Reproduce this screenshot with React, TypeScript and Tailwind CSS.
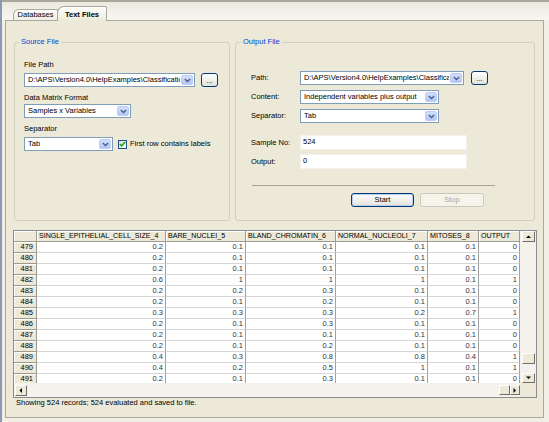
import React from "react";

const headers = [
  { label: "SINGLE_EPITHELIAL_CELL_SIZE_4", w: "w-[129px]" },
  { label: "BARE_NUCLEI_5", w: "w-[80px]" },
  { label: "BLAND_CHROMATIN_6", w: "w-[90px]" },
  { label: "NORMAL_NUCLEOLI_7", w: "w-[92px]" },
  { label: "MITOSES_8", w: "w-[51px]" },
  { label: "OUTPUT", w: "w-[41px]" },
];

const rows: [number, string[]][] = [
  [479, ["0.2", "0.1", "0.1", "0.1", "0.1", "0"]],
  [480, ["0.2", "0.1", "0.1", "0.1", "0.1", "0"]],
  [481, ["0.2", "0.1", "0.1", "0.1", "0.1", "0"]],
  [482, ["0.6", "1", "1", "1", "0.1", "1"]],
  [483, ["0.2", "0.2", "0.3", "0.1", "0.1", "0"]],
  [484, ["0.2", "0.1", "0.2", "0.1", "0.1", "0"]],
  [485, ["0.3", "0.3", "0.3", "0.2", "0.7", "1"]],
  [486, ["0.2", "0.1", "0.3", "0.1", "0.1", "0"]],
  [487, ["0.2", "0.1", "0.1", "0.1", "0.1", "0"]],
  [488, ["0.2", "0.1", "0.2", "0.1", "0.1", "0"]],
  [489, ["0.4", "0.3", "0.8", "0.8", "0.4", "1"]],
  [490, ["0.4", "0.2", "0.5", "1", "0.1", "1"]],
  [491, ["0.2", "0.1", "0.3", "0.1", "0.1", "0"]],
];

function Combo({ w, value }: { w: string; value: string }) {
  return (
    <div className={`flex h-[14px] shrink-0 ${w} border border-[#7f9db9] bg-white`}>
      <div className="flex-1 overflow-hidden whitespace-nowrap pl-[3px] leading-[12px]">{value}</div>
      <div className="m-px flex w-[12px] items-center justify-center rounded-[2px] border border-[#bccdf5] bg-gradient-to-b from-[#d3e0fd] to-[#b2c6f6]">
        <svg width="7" height="5" viewBox="0 0 7 5">
          <path d="M0.8 1 L3.5 3.6 L6.2 1" fill="none" stroke="#4d6185" strokeWidth="1.4" />
        </svg>
      </div>
    </div>
  );
}

function DotsButton() {
  return (
    <div className="flex h-[14px] w-[17px] shrink-0 items-end justify-center rounded-[3px] border border-[#003c74] bg-gradient-to-b from-white to-[#e3e2d9] pb-px leading-[9px]">
      ...
    </div>
  );
}

function ScrollBtn({ dir, cls }: { dir: "up" | "down" | "left" | "right"; cls: string }) {
  const vertical = dir === "up" || dir === "down";
  const d =
    dir === "up"
      ? "M0 3 L2.5 0.5 L5 3 Z"
      : dir === "down"
      ? "M0 0.5 L2.5 3 L5 0.5 Z"
      : dir === "left"
      ? "M3 0 L0.5 2.5 L3 5 Z"
      : "M0.5 0 L3 2.5 L0.5 5 Z";
  return (
    <div
      className={`flex shrink-0 items-center justify-center border border-t-white border-l-white border-r-[#716f64] border-b-[#716f64] bg-[#ece9d8] ${cls}`}
    >
      <svg width={vertical ? 5 : 3.5} height={vertical ? 3.5 : 5} viewBox={vertical ? "0 0 5 3.5" : "0 0 3.5 5"}>
        <path d={d} fill="#000" />
      </svg>
    </div>
  );
}

function Label({ children }: { children: React.ReactNode }) {
  return <div className="w-[49px] shrink-0 leading-[10px]">{children}</div>;
}

export default function App() {
  return (
    <div className="flex h-[422px] w-[549px] flex-col overflow-hidden border-l-2 border-[#9097b0] bg-[#f1efe5] font-['Liberation_Sans',Arial,sans-serif] text-[7.5px] leading-[10px] text-black">
      <div className="h-[2px] shrink-0 bg-[#aaa89a]" />

      {/* Tab strip */}
      <div className="flex h-[18px] shrink-0 items-end bg-gradient-to-b from-[#eceadf] to-[#f7f6f1] pl-[11px]">
        <div className="flex h-[11px] w-[45px] items-center justify-center rounded-tl-[6px] rounded-tr-[2px] border border-b-0 border-[#aaa89a] bg-gradient-to-b from-white to-[#eeede6]">
          Databases
        </div>
        <div className="relative z-10 -mb-px -ml-px flex h-[15px] w-[50px] items-center justify-center rounded-tl-[7px] rounded-tr-[2px] border border-b-0 border-[#aaa89a] bg-gradient-to-b from-white to-[#ece9d8] pt-[2px] font-bold">
          Text Files
        </div>
      </div>

      {/* Tab page */}
      <div className="ml-[3px] flex h-[398px] w-[539px] shrink-0 flex-col border border-[#aaa89a] bg-[#ece9d8]">
        <div className="flex gap-[5px] pl-[8px] pt-[16px]">
          {/* Source File */}
          <fieldset className="h-[184px] w-[216px] rounded-[3px] border border-[#d0d0bf]">
            <legend className="ml-[4px] px-[2px] leading-[10px] text-[#0046d5]">Source File</legend>
            <div className="flex flex-col pl-[9px]">
              <div className="mt-[13px]">File Path</div>
              <div className="mt-[3px] flex gap-[6px]">
                <Combo w="w-[171px]" value="D:\APS\Version4.0\HelpExamples\Classification\breast-cancer.txt" />
                <DotsButton />
              </div>
              <div className="mt-[6px]">Data Matrix Format</div>
              <div className="mt-px">
                <Combo w="w-[107px]" value="Samples x Variables" />
              </div>
              <div className="mt-[6px]">Separator</div>
              <div className="mt-[3px] flex items-center">
                <Combo w="w-[89px]" value="Tab" />
                <div className="ml-[5px] flex h-[9px] w-[9px] items-center justify-center border border-[#1c5180] bg-gradient-to-br from-[#dcdcd6] to-white">
                  <svg width="7" height="6" viewBox="0 0 7 6">
                    <path d="M0.8 3 L2.6 4.8 L6.2 1" fill="none" stroke="#21a121" strokeWidth="1.5" />
                  </svg>
                </div>
                <span className="ml-[3px] whitespace-nowrap">First row contains labels</span>
              </div>
            </div>
          </fieldset>

          {/* Output File */}
          <fieldset className="h-[184px] w-[300px] rounded-[3px] border border-[#d0d0bf]">
            <legend className="ml-[5px] px-[2px] leading-[10px] text-[#0046d5]">Output File</legend>
            <div className="flex flex-col pl-[15px]">
              <div className="mt-[24px] flex items-center">
                <Label>Path:</Label>
                <Combo w="w-[164px]" value="D:\APS\Version4.0\HelpExamples\Classification\output.txt" />
                <div className="ml-[7px]">
                  <DotsButton />
                </div>
              </div>
              <div className="mt-[5px] flex items-center">
                <Label>Content:</Label>
                <Combo w="w-[139px]" value="Independent variables plus output" />
              </div>
              <div className="mt-[5px] flex items-center">
                <Label>Separator:</Label>
                <Combo w="w-[139px]" value="Tab" />
              </div>
              <div className="mt-[12px] flex items-center">
                <Label>Sample No:</Label>
                <div className="h-[15px] w-[167px] border border-[#f3f2ec] bg-white pl-[2px] pt-px">524</div>
              </div>
              <div className="mt-[4px] flex items-center">
                <Label>Output:</Label>
                <div className="h-[15px] w-[167px] border border-[#f3f2ec] bg-white pl-[2px] pt-px">0</div>
              </div>
              <div className="ml-px mt-[16px] h-px w-[243px] bg-[#a5a397]" />
              <div className="mt-[7px] flex gap-[6px] pl-[100px]">
                <div className="flex h-[14px] w-[63px] items-center justify-center rounded-[3px] border border-[#003c74] bg-gradient-to-b from-white to-[#e3e2d9] shadow-[inset_0_0_0_1px_#bccbf3]">
                  Start
                </div>
                <div className="flex h-[14px] w-[64px] items-center justify-center rounded-[3px] border border-[#cac8bb] bg-[#f5f4ea] text-[#aca899]">
                  Stop
                </div>
              </div>
            </div>
          </fieldset>
        </div>

        {/* Grid */}
        <div className="ml-[7px] mt-[9px] flex h-[168px] w-[524px] shrink-0 flex-col border border-[#8c8c8c] bg-[#f3f2ec]">
          <div className="flex h-[152px]">
            <div className="flex w-[506px] flex-col overflow-hidden">
              <div className="flex h-[11px] shrink-0">
                <div className="w-[23px] shrink-0 border-r border-b border-[#9d9b8f] bg-[#ece9d8] shadow-[inset_1px_1px_0_#fff]" />
                {headers.map((h) => (
                  <div
                    key={h.label}
                    className={`${h.w} shrink-0 overflow-hidden whitespace-nowrap border-r border-b border-[#9d9b8f] bg-[#ece9d8] pl-[2px] text-[7.1px] leading-[10px] shadow-[inset_1px_1px_0_#fff]`}
                  >
                    {h.label}
                  </div>
                ))}
              </div>
              <div className="flex-1 overflow-hidden">
                {rows.map(([n, vals]) => (
                  <div key={n} className="flex h-[11px]">
                    <div className="w-[23px] shrink-0 border-r border-b border-[#9d9b8f] bg-[#ece9d8] pr-[3px] text-right leading-[10px] shadow-[inset_1px_1px_0_#fff]">
                      {n}
                    </div>
                    {vals.map((v, i) => (
                      <div
                        key={i}
                        className={`${headers[i].w} shrink-0 border-r border-b border-r-[#a0a0a0] border-b-[#d6d6d6] bg-white pr-[2px] text-right leading-[10px] text-[#333]`}
                      >
                        {v}
                      </div>
                    ))}
                  </div>
                ))}
              </div>
            </div>
            {/* vertical scrollbar */}
            <div className="flex w-[16px] flex-col items-center">
              <ScrollBtn dir="up" cls="h-[11px] w-[13px]" />
              <div className="mt-[111px] h-[11px] w-[13px] border border-t-white border-l-white border-r-[#716f64] border-b-[#716f64] bg-[#ece9d8]" />
              <ScrollBtn dir="down" cls="mt-[9px] h-[10px] w-[13px]" />
            </div>
          </div>
          <div className="flex h-[14px]">
            <div className="flex w-[506px] items-center">
              <ScrollBtn dir="left" cls="ml-px h-[11px] w-[12px]" />
              <div className="ml-auto h-[10px] w-[11px] border border-t-white border-l-white border-r-[#716f64] border-b-[#716f64] bg-[#ece9d8]" />
              <ScrollBtn dir="right" cls="h-[10px] w-[10px]" />
            </div>
            <div className="w-[16px] bg-[#ece9d8]" />
          </div>
        </div>

        <div className="pl-[10px] leading-[9px]">Showing 524 records; 524 evaluated and saved to file.</div>
      </div>
    </div>
  );
}
